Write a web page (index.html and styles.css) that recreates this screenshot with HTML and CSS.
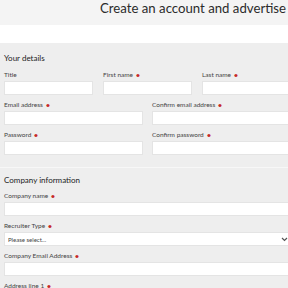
FILE: index.html
```html
<!DOCTYPE html>
<html lang="en">
<head>
  <meta charset="UTF-8" />
  <title>Create an account and advertise</title>
  <link rel="stylesheet" href="styles.css">
</head>
<body>
  <div class="page">
    <div class="header">
      <h1>Create an account and advertise</h1>
    </div>

    <form class="signup">
      <div class="section">
        <h2>Your details</h2>
        <div class="row row3">
          <div class="field">
            <label>Title</label>
            <input type="text">
          </div>
          <div class="field">
            <label class="req">First name</label>
            <input type="text">
          </div>
          <div class="field">
            <label class="req">Last name</label>
            <input type="text">
          </div>
        </div>
        <div class="row row2">
          <div class="field">
            <label class="req">Email address</label>
            <input type="email">
          </div>
          <div class="field">
            <label class="req">Confirm email address</label>
            <input type="email">
          </div>
        </div>
        <div class="row row2">
          <div class="field">
            <label class="req">Password</label>
            <input type="password">
          </div>
          <div class="field">
            <label class="req">Confirm password</label>
            <input type="password">
          </div>
        </div>
      </div>

      <div class="section section-company">
        <h2>Company information</h2>
        <div class="field">
          <label class="req">Company name</label>
          <input type="text">
        </div>
        <div class="field">
          <label class="req">Recruiter Type</label>
          <div class="select-wrap">
            <select>
              <option>Please select...</option>
            </select>
            <svg class="chevron" width="7" height="5" viewBox="0 0 7 5">
              <path d="M1 1 L3.5 3.5 L6 1" fill="none" stroke="#555" stroke-width="1.2"/>
            </svg>
          </div>
        </div>
        <div class="field">
          <label class="req">Company Email Address</label>
          <input type="email">
        </div>
        <div class="field">
          <label class="req">Address line 1</label>
          <input type="text">
        </div>
      </div>
    </form>
  </div>
</body>
</html>
```

FILE: styles.css
```css
* {
  margin: 0;
  padding: 0;
  box-sizing: border-box;
  font-family: Lato, "Open Sans", sans-serif;
}

html, body {
  overflow: hidden;
  background: #fff;
}

.page {
  width: 295px;
}

.header {
  background: #f4f4f4;
  height: 25px;
  text-align: right;
  padding-right: 9px;
}

h1 {
  font-size: 13.2px;
  line-height: 17px;
  font-weight: 400;
  color: #2b2b2b;
}

.signup {
  margin-top: 18px;
  background: #eeeeee;
}

.section {
  padding: 9px 4px 7px;
}

.section-company {
  border-top: 1px solid #f7f7f7;
  padding-top: 6px;
}

h2 {
  font-size: 8px;
  line-height: 12px;
  font-weight: 400;
  color: #222;
  margin-bottom: 6px;
}

.section-company h2 {
  margin-bottom: 5px;
}

.row {
  display: grid;
}

.row3 {
  grid-template-columns: repeat(3, 89px);
  column-gap: 10px;
}

.row2 {
  grid-template-columns: repeat(2, 139px);
  column-gap: 9px;
}

.field {
  display: flex;
  flex-direction: column;
  margin-bottom: 5px;
}

label {
  font-size: 6.5px;
  line-height: 10px;
  color: #444;
  margin-bottom: 1px;
}

label.req::after {
  content: "\2022";
  display: inline-block;
  color: #c62828;
  margin-left: 3px;
  transform: scale(1.3);
}

input, select {
  display: block;
  height: 14px;
  width: 100%;
  background: #fff;
  border: 1px solid #e4e4e4;
  outline: none;
}

.select-wrap {
  position: relative;
}

select {
  appearance: none;
  font-size: 6px;
  color: #444;
  padding-left: 3px;
}

.chevron {
  position: absolute;
  right: 3px;
  top: 5px;
}
```
